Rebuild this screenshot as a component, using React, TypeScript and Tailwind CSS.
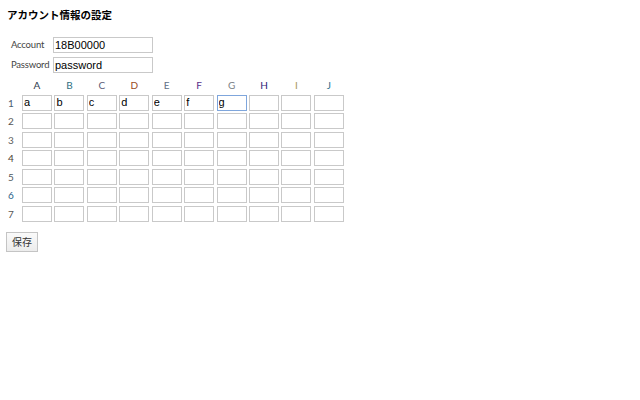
import React, { useState } from 'react';

const COLS = ['A', 'B', 'C', 'D', 'E', 'F', 'G', 'H', 'I', 'J'];
const ROWS = [1, 2, 3, 4, 5, 6, 7];

// header letters come out slightly tinted in the reference (cleartype), keep it
const colColor: Record<string, string> = {
  A: 'text-[#2c3a4c]',
  B: 'text-[#2f6f80]',
  C: 'text-[#5c6078]',
  D: 'text-[#9a4a22]',
  E: 'text-[#5e6e86]',
  F: 'text-[#5a2f8a]',
  G: 'text-[#7a7f86]',
  H: 'text-[#2c2478]',
  I: 'text-[#a89a5a]',
  J: 'text-[#2c6f8c]',
};

const rowColor: Record<number, string> = {
  1: 'text-[#4a6070]',
  2: 'text-[#555555]',
  3: 'text-[#606060]',
  4: 'text-[#4a3a30]',
  5: 'text-[#505a60]',
  6: 'text-[#2a5f8a]',
  7: 'text-[#555555]',
};

const App: React.FC = () => {
  const [account, setAccount] = useState('18B00000');
  const [password, setPassword] = useState('password');
  const [cells, setCells] = useState<string[][]>(() =>
    ROWS.map((r) => COLS.map((c, i) => (r === 1 && i < 7 ? c.toLowerCase() : '')))
  );

  const setCell = (r: number, c: number, v: string) => {
    setCells((prev) => prev.map((row, ri) => (ri === r ? row.map((x, ci) => (ci === c ? v : x)) : row)));
  };

  return (
    <div className="min-h-screen bg-white p-[7px] text-[#222] font-['Lato','Noto_Sans',sans-serif]">
      <h1 className="text-[10.5px] leading-[16px] font-bold text-black font-['Noto_Sans_CJK_JP',sans-serif]">
        アカウント情報の設定
      </h1>

      <div className="mt-[14px] ml-[4px] grid grid-cols-[42px_100px] gap-y-[4px] items-center">
        <label className="text-[9.5px] tracking-[-0.2px] text-[#444]">Account</label>
        <input
          value={account}
          onChange={(e) => setAccount(e.target.value)}
          className="h-[16px] border border-[#c9c9c9] px-[1px] text-[11px] text-black outline-none font-['Liberation_Sans',sans-serif]"
        />
        <label className="text-[9.5px] tracking-[-0.2px] text-[#444]">Password</label>
        <input
          value={password}
          onChange={(e) => setPassword(e.target.value)}
          className="h-[16px] border border-[#c9c9c9] px-[1px] text-[11px] text-black outline-none font-['Liberation_Sans',sans-serif]"
        />
      </div>

      <div className="mt-[5px] grid grid-cols-[12.5px_repeat(10,30px)] gap-x-[2.44px] gap-y-[2.5px] items-center">
        <div className="h-[14px]" />
        {COLS.map((c) => (
          <div key={c} className={`h-[14px] text-center text-[10px] leading-[14px] ${colColor[c]}`}>
            {c}
          </div>
        ))}
        {ROWS.map((r, ri) => (
          <React.Fragment key={r}>
            <div className={`pl-[1px] text-[10px] leading-[16px] ${rowColor[r]}`}>{r}</div>
            {COLS.map((c, ci) => (
              <input
                key={c}
                value={cells[ri][ci]}
                onChange={(e) => setCell(ri, ci, e.target.value)}
                autoFocus={r === 1 && c === 'G'}
                className="h-[16px] w-[30px] border border-[#c9c9c9] px-[1px] text-[11px] text-black outline-none focus:border-[#7fa6dc] font-['Liberation_Sans',sans-serif]"
              />
            ))}
          </React.Fragment>
        ))}
      </div>

      <button className="mt-[10px] ml-[-1px] h-[20px] w-[32px] border border-[#c4c4c4] bg-gradient-to-b from-[#fafafa] to-[#ececec] text-[10px] text-[#333] font-['Noto_Sans_CJK_JP',sans-serif]">
        保存
      </button>
    </div>
  );
};

export default App;
